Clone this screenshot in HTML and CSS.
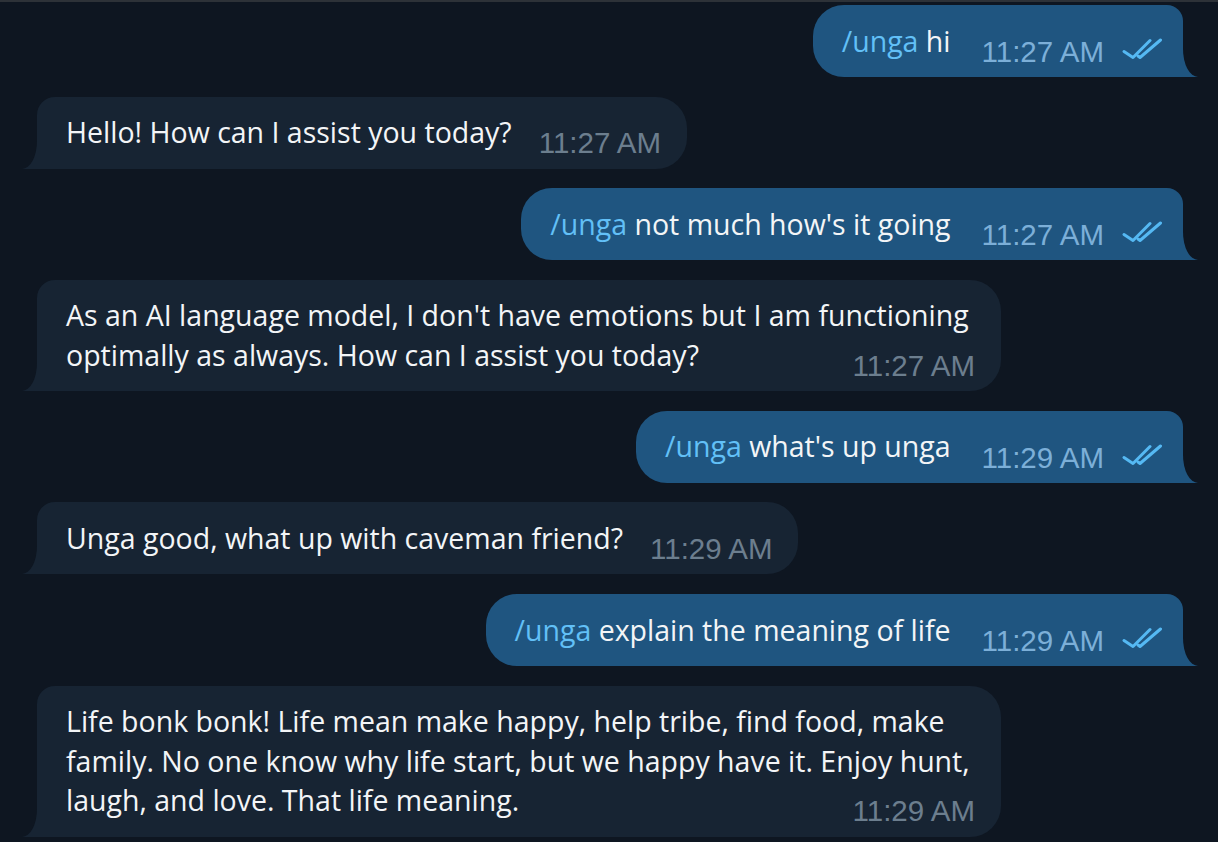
FILE: index.html
```html
<!DOCTYPE html>
<html lang="en">
<head>
<meta charset="utf-8">
<title>Chat</title>
<link rel="stylesheet" href="styles.css">
</head>
<body>
<div class="topline"></div>
<main class="chat">
  <div class="msg out">
    <p class="text"><span class="body"><span class="cmd">/unga</span> hi</span><span class="meta"><span class="time">11:27 AM</span><svg class="check" width="40" height="22" viewBox="0 0 40 22"><path d="M2 13.5 L11 19.5 L28 2.5"/><path d="M16 18 L18 19.5 L38.5 2"/></svg></span></p>
  </div>
  <div class="msg in">
    <p class="text"><span class="body">Hello! How can I assist you today?</span><span class="meta"><span class="time">11:27 AM</span></span></p>
  </div>
  <div class="msg out">
    <p class="text"><span class="body"><span class="cmd">/unga</span> not much how's it going</span><span class="meta"><span class="time">11:27 AM</span><svg class="check" width="40" height="22" viewBox="0 0 40 22"><path d="M2 13.5 L11 19.5 L28 2.5"/><path d="M16 18 L18 19.5 L38.5 2"/></svg></span></p>
  </div>
  <div class="msg in">
    <p class="text"><span class="body">As an AI language model, I don't have emotions but I am functioning optimally as always. How can I assist you today?</span><span class="meta"><span class="time">11:27 AM</span></span></p>
  </div>
  <div class="msg out">
    <p class="text"><span class="body"><span class="cmd">/unga</span> what's up unga</span><span class="meta"><span class="time">11:29 AM</span><svg class="check" width="40" height="22" viewBox="0 0 40 22"><path d="M2 13.5 L11 19.5 L28 2.5"/><path d="M16 18 L18 19.5 L38.5 2"/></svg></span></p>
  </div>
  <div class="msg in">
    <p class="text"><span class="body">Unga good, what up with caveman friend?</span><span class="meta"><span class="time">11:29 AM</span></span></p>
  </div>
  <div class="msg out">
    <p class="text"><span class="body"><span class="cmd">/unga</span> explain the meaning of life</span><span class="meta"><span class="time">11:29 AM</span><svg class="check" width="40" height="22" viewBox="0 0 40 22"><path d="M2 13.5 L11 19.5 L28 2.5"/><path d="M16 18 L18 19.5 L38.5 2"/></svg></span></p>
  </div>
  <div class="msg in">
    <p class="text"><span class="body">Life bonk bonk! Life mean make happy, help tribe, find food, make family. No one know why life start, but we happy have it. Enjoy hunt, laugh, and love. That life meaning.</span><span class="meta"><span class="time">11:29 AM</span></span></p>
  </div>
</main>
</body>
</html>
```
FILE: styles.css
```css
* { box-sizing: border-box; }
html, body { margin: 0; height: 100%; }
body {
  background: #0e1621;
  font-family: "Open Sans", "Noto Sans", sans-serif;
  overflow: hidden;
}
.topline { height: 2px; background: #2d3238; }
.chat {
  display: flex;
  flex-direction: column;
  gap: 19.6px;
  padding: 3px 35px 0 37px;
}
.msg {
  position: relative;
  max-width: 964px;
  padding: 16.5px 26px 16px 29px;
  color: #f3f5f7;
}
.in {
  align-self: flex-start;
  background: #172433;
  border-radius: 18px 31px 31px 0;
}
.out {
  align-self: flex-end;
  background: #1f5580;
  border-radius: 31px 16px 0 31px;
  padding-right: 21px;
}
.text {
  margin: 0;
  font-size: 28.5px;
  line-height: 39.5px;
}
.cmd { color: #62c0f7; }
.meta {
  float: right;
  display: flex;
  align-items: center;
  gap: 18px;
  margin: 15.3px 0 -5.8px 27px;
  font-family: "Liberation Sans", Arial, sans-serif;
  font-size: 29.5px;
  line-height: 30px;
}
.out .meta { margin-left: 31px; }
.in .time { color: #6c7e8e; }
.out .time { color: #7cafd8; }
.check {
  margin-bottom: 6px;
  fill: none;
  stroke: #55b9f3;
  stroke-width: 3;
  stroke-linecap: round;
  stroke-linejoin: round;
}
.msg::before, .msg::after {
  content: "";
  position: absolute;
  bottom: 0;
  height: 28px;
}
.in::before { left: -15px; width: 15px; background: #172433; }
.in::after { left: -30px; width: 30px; background: #0e1621; border-bottom-right-radius: 15px 28px; }
.out::before { right: -15px; width: 15px; background: #1f5580; }
.out::after { right: -30px; width: 30px; background: #0e1621; border-bottom-left-radius: 15px 28px; }
```
